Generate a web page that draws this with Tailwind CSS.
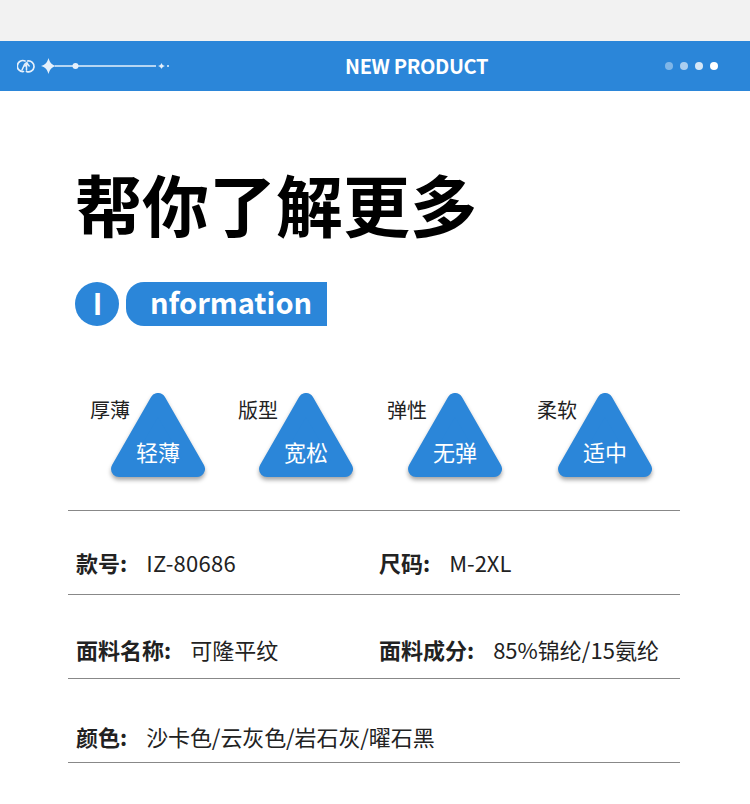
<!DOCTYPE html>
<html lang="zh">
<head>
    <meta charset="UTF-8">
    <meta name="viewport" content="width=device-width, initial-scale=1.0">
    <title>Information</title>
    <script src="https://cdn.jsdelivr.net/npm/@tailwindcss/browser@4"></script>
</head>
<body class="bg-white font-['Noto_Sans_CJK_SC','Noto_Sans',sans-serif] text-[#222]">
    <main class="w-[750px] h-[804px] overflow-hidden">
        <div class="h-[41px] bg-[#f2f2f2]"></div>

        <!-- top bar -->
        <header class="h-[50px] bg-[#2b86d9] flex items-center justify-between pl-[17px] pr-[32px] relative">
            <svg width="155" height="20" viewBox="0 0 155 20" fill="none">
                <path d="M6.500 15.500A5.500 5.500 0 1 1 8 5" stroke="#e6f0fb" stroke-width="1.700" stroke-linecap="round"/>
                <path d="M10.500 5A5.500 5.500 0 1 1 9.500 15.500" stroke="#e6f0fb" stroke-width="1.700" stroke-linecap="round"/>
                <path d="M5 14L7.500 8.500C8.500 6.500 10 6.500 10.500 7.500" stroke="#e6f0fb" stroke-width="1.500" stroke-linecap="round"/>
                <path d="M9.500 14V8M7.800 10L10 7.500L12.200 10" stroke="#e6f0fb" stroke-width="1.500" stroke-linecap="round"/>
                <path d="M24 10 C28 9 30 7 31.500 2 C33 7 35 9 39 10 C35 11 33 13 31.500 18 C30 13 28 11 24 10Z" fill="#e6f0fb"/>
                <path d="M38 10H139" stroke="#e6f0fb" stroke-width="1.300"/>
                <circle cx="58.500" cy="10" r="3" fill="#e6f0fb"/>
                <path d="M141 10 C143 9.500 144 8.500 144.500 7 C145 8.500 146 9.500 148 10 C146 10.500 145 11.500 144.500 13 C144 11.500 143 10.500 141 10Z" fill="#e6f0fb"/>
                <circle cx="151" cy="10" r="1" fill="#e6f0fb"/>
            </svg>
            <h2 class="absolute left-[345px] top-0 h-full flex items-center pb-[1px] text-[20px] font-bold text-white tracking-[-0.35px] font-['Noto_Sans_CJK_SC',sans-serif]">NEW PRODUCT</h2>
            <div class="flex items-center gap-[7px]">
                <span class="w-2 h-2 rounded-full bg-white/40"></span>
                <span class="w-2 h-2 rounded-full bg-white/60"></span>
                <span class="w-2 h-2 rounded-full bg-white/80"></span>
                <span class="w-2 h-2 rounded-full bg-white"></span>
            </div>
        </header>

        <section class="pl-[75px] pt-[66px]">
            <h1 class="text-[67px] leading-[92px] font-bold text-black">帮你了解更多</h1>
            <div class="flex items-center gap-[7px] mt-[33px]">
                <span class="w-[44px] h-[44px] rounded-full bg-[#2b86d9] text-white flex items-center justify-center pb-[3px] pl-[1px] text-[29px] font-bold leading-none">I</span>
                <span class="w-[201px] h-[44px] rounded-l-[18px] bg-[#2b86d9] text-white flex items-center pl-[24px] pb-[6px] text-[29px] font-bold leading-none">nformation</span>
            </div>
        </section>

        <!-- attribute triangles -->
        <section class="flex pl-[90px] mt-[67px]">
            <div class="w-[148px] flex">
                <span class="text-[20px] leading-[28px] mt-[3px] w-[21px] whitespace-nowrap">厚薄</span>
                <div class="relative w-[94px] h-[86px]">
                    <svg width="94" height="90" viewBox="0 0 94 90" class="absolute left-0 top-0 drop-shadow-[0_3px_2px_rgba(0,0,0,0.35)]"><path d="M47 8 L86 76 H8Z" fill="#2b86d9" stroke="#2b86d9" stroke-width="16" stroke-linejoin="round"/></svg>
                    <span class="absolute left-0 right-0 top-[42px] text-center text-white text-[22px] leading-[32px]">轻薄</span>
                </div>
            </div>
            <div class="w-[149px] flex">
                <span class="text-[20px] leading-[28px] mt-[3px] w-[21px] whitespace-nowrap">版型</span>
                <div class="relative w-[94px] h-[86px]">
                    <svg width="94" height="90" viewBox="0 0 94 90" class="absolute left-0 top-0 drop-shadow-[0_3px_2px_rgba(0,0,0,0.35)]"><path d="M47 8 L86 76 H8Z" fill="#2b86d9" stroke="#2b86d9" stroke-width="16" stroke-linejoin="round"/></svg>
                    <span class="absolute left-0 right-0 top-[42px] text-center text-white text-[22px] leading-[32px]">宽松</span>
                </div>
            </div>
            <div class="w-[150px] flex">
                <span class="text-[20px] leading-[28px] mt-[3px] w-[21px] whitespace-nowrap">弹性</span>
                <div class="relative w-[94px] h-[86px]">
                    <svg width="94" height="90" viewBox="0 0 94 90" class="absolute left-0 top-0 drop-shadow-[0_3px_2px_rgba(0,0,0,0.35)]"><path d="M47 8 L86 76 H8Z" fill="#2b86d9" stroke="#2b86d9" stroke-width="16" stroke-linejoin="round"/></svg>
                    <span class="absolute left-0 right-0 top-[42px] text-center text-white text-[22px] leading-[32px]">无弹</span>
                </div>
            </div>
            <div class="w-[149px] flex">
                <span class="text-[20px] leading-[28px] mt-[3px] w-[21px] whitespace-nowrap">柔软</span>
                <div class="relative w-[94px] h-[86px]">
                    <svg width="94" height="90" viewBox="0 0 94 90" class="absolute left-0 top-0 drop-shadow-[0_3px_2px_rgba(0,0,0,0.35)]"><path d="M47 8 L86 76 H8Z" fill="#2b86d9" stroke="#2b86d9" stroke-width="16" stroke-linejoin="round"/></svg>
                    <span class="absolute left-0 right-0 top-[42px] text-center text-white text-[22px] leading-[32px]">适中</span>
                </div>
            </div>
        </section>

        <!-- spec rows -->
        <section class="ml-[68px] w-[612px] mt-[31px] border-t border-[#888] text-[22px] leading-[32px]">
            <div class="h-[84px] border-b border-[#888] flex pl-[8px] pt-[35px]">
                <div class="w-[303px]"><b class="font-bold">款号:</b><span class="ml-[19px] tracking-[0.3px]">IZ-80686</span></div>
                <div><b class="font-bold">尺码:</b><span class="ml-[19px]">M-2XL</span></div>
            </div>
            <div class="h-[84px] border-b border-[#888] flex pl-[8px] pt-[38px]">
                <div class="w-[303px]"><b class="font-bold">面料名称:</b><span class="ml-[19px]">可隆平纹</span></div>
                <div><b class="font-bold">面料成分:</b><span class="ml-[19px]">85%锦纶/15氨纶</span></div>
            </div>
            <div class="h-[84px] border-b border-[#888] flex pl-[8px] pt-[41px]">
                <div><b class="font-bold">颜色:</b><span class="ml-[19px] tracking-[-0.1px]">沙卡色/云灰色/岩石灰/曜石黑</span></div>
            </div>
        </section>
    </main>
</body>
</html>
